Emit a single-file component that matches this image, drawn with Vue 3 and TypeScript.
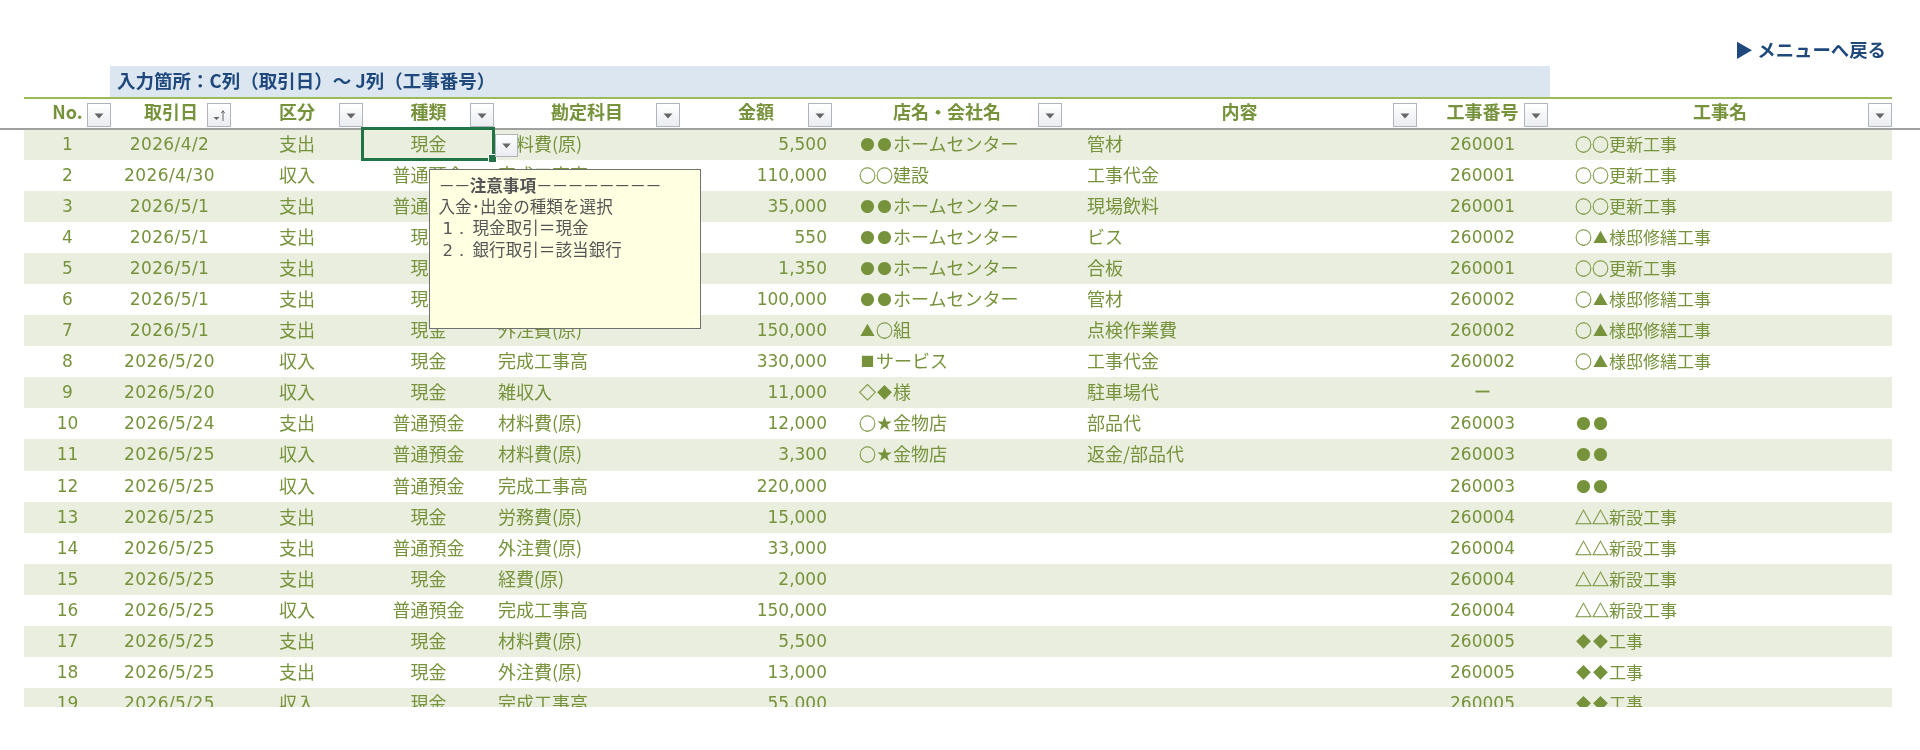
<script setup lang="ts">
interface Row { no: number; date: string; kind: string; type: string; account: string; amount: string; shop: string; detail: string; code: string; name: string }
interface Part { text: string; cls: string }

const headers = [
  { label: 'No.', sort: false },
  { label: '取引日', sort: true },
  { label: '区分', sort: false },
  { label: '種類', sort: false },
  { label: '勘定科目', sort: false },
  { label: '金額', sort: false },
  { label: '店名・会社名', sort: false },
  { label: '内容', sort: false },
  { label: '工事番号', sort: false },
  { label: '工事名', sort: false },
]

const raw = [
  '2026/4/2|支出|現金|材料費(原)|5,500|●●ホームセンター|管材|260001|○○更新工事',
  '2026/4/30|収入|普通預金|完成工事高|110,000|○○建設|工事代金|260001|○○更新工事',
  '2026/5/1|支出|普通預金|経費(原)|35,000|●●ホームセンター|現場飲料|260001|○○更新工事',
  '2026/5/1|支出|現金|材料費(原)|550|●●ホームセンター|ビス|260002|○▲様邸修繕工事',
  '2026/5/1|支出|現金|材料費(原)|1,350|●●ホームセンター|合板|260001|○○更新工事',
  '2026/5/1|支出|現金|材料費(原)|100,000|●●ホームセンター|管材|260002|○▲様邸修繕工事',
  '2026/5/1|支出|現金|外注費(原)|150,000|▲○組|点検作業費|260002|○▲様邸修繕工事',
  '2026/5/20|収入|現金|完成工事高|330,000|■サービス|工事代金|260002|○▲様邸修繕工事',
  '2026/5/20|収入|現金|雑収入|11,000|◇◆様|駐車場代|ー|',
  '2026/5/24|支出|普通預金|材料費(原)|12,000|○★金物店|部品代|260003|●●',
  '2026/5/25|収入|普通預金|材料費(原)|3,300|○★金物店|返金/部品代|260003|●●',
  '2026/5/25|収入|普通預金|完成工事高|220,000|||260003|●●',
  '2026/5/25|支出|現金|労務費(原)|15,000|||260004|△△新設工事',
  '2026/5/25|支出|普通預金|外注費(原)|33,000|||260004|△△新設工事',
  '2026/5/25|支出|現金|経費(原)|2,000|||260004|△△新設工事',
  '2026/5/25|収入|普通預金|完成工事高|150,000|||260004|△△新設工事',
  '2026/5/25|支出|現金|材料費(原)|5,500|||260005|◆◆工事',
  '2026/5/25|支出|現金|外注費(原)|13,000|||260005|◆◆工事',
  '2026/5/25|収入|現金|完成工事高|55,000|||260005|◆◆工事',
]

const rows: Row[] = raw.map((line, i) => {
  const [date, kind, type, account, amount, shop, detail, code, name] = line.split('|')
  return { no: i + 1, date, kind, type, account, amount, shop, detail, code, name }
})

const symbolClass: Record<string, string> = {
  '●': 'sym s-dot', '◆': 'sym s-dia', '■': 'sym s-sq', '▲': 'sym s-tri', '★': 'sym s-star',
  '○': 'sym s-line', '◇': 'sym s-line', '△': 'sym s-line',
}

function parts(text: string): Part[] {
  return text.split(/([●○▲■◆◇△★])/).filter(Boolean).map((t) => ({ text: t, cls: symbolClass[t] ?? '' }))
}
</script>

<template>
  <div class="page">
    <div class="menu-row"><span class="menu-link">▶ メニューへ戻る</span></div>
    <div class="band-row"><div class="band">入力箇所：C列（取引日）～ J列（工事番号）</div></div>
    <div class="sheet-pad">
      <div class="head grid">
        <div v-for="h in headers" :key="h.label" class="hcell">
          <span>{{ h.label }}</span>
          <span class="fbtn">
            <svg width="22" height="22" viewBox="0 0 22 22">
              <template v-if="h.sort">
                <path d="M5.5 13h6l-3 3z" fill="#666" />
                <path d="M15 17V7M13.3 9.2 15 6.6l1.7 2.6" fill="none" stroke="#666" stroke-width="1" />
              </template>
              <path v-else d="M6.5 9.5h9l-4.5 5z" fill="#666" />
            </svg>
          </span>
        </div>
      </div>
    </div>
    <div class="freeze"></div>
    <div class="body-wrap">
      <div class="sheet-pad rows">
        <div v-for="r in rows" :key="r.no" class="grid row" :class="{ odd: r.no % 2 === 1 }">
          <div class="c ctr num">{{ r.no }}</div>
          <div class="c ctr num date">{{ r.date }}</div>
          <div class="c ctr">{{ r.kind }}</div>
          <div class="c ctr">{{ r.type }}</div>
          <div class="c account">{{ r.account }}</div>
          <div class="c amount num">{{ r.amount }}</div>
          <div class="c shop"><span v-for="(p, i) in parts(r.shop)" :key="i" :class="p.cls">{{ p.text }}</span></div>
          <div class="c detail">{{ r.detail }}</div>
          <div class="c ctr num">{{ r.code }}</div>
          <div class="c name"><span v-for="(p, i) in parts(r.name)" :key="i" :class="p.cls">{{ p.text }}</span></div>
        </div>
      </div>
      <div class="selection"><i class="handle"></i></div>
      <span class="dd">
        <svg width="22" height="21" viewBox="0 0 22 21"><path d="M6.5 8.5h9l-4.5 5z" fill="#666" /></svg>
      </span>
      <div class="note">
        <div class="note-title"><span class="dash">－－</span>注意事項<span class="dash">－－－－－－－－</span></div>
        <div>入金･出金の種類を選択</div>
        <div class="item"><span class="idx">1．</span>現金取引＝現金</div>
        <div class="item"><span class="idx">2．</span>銀行取引＝該当銀行</div>
      </div>
    </div>
  </div>
</template>

<style>
html, body { margin: 0; background: #fff; overflow: hidden; }
</style>

<style scoped>
.page {
  height: 750px;
  background: #fff;
  font-family: "Noto Sans CJK JP", "Noto Sans", sans-serif;
  font-size: 18px;
  color: #76933c;
  filter: blur(0.35px);
}
.menu-row {
  height: 66px;
  display: flex;
  justify-content: flex-end;
  align-items: flex-end;
  padding-right: 34px;
  box-sizing: border-box;
  padding-bottom: 4px;
}
.menu-link { color: #1f497d; font-weight: 700; font-size: 18.4px; line-height: 26px; }
.band-row { padding-left: 110px; }
.band {
  width: 1440px;
  height: 32px;
  background: #dce6f1;
  color: #1f497d;
  font-weight: 700;
  font-size: 18.5px;
  line-height: 29px;
  padding-left: 7px;
  box-sizing: border-box;
}
.sheet-pad { margin-left: 24px; width: 1868px; }
.grid {
  display: grid;
  grid-template-columns: 87px 120px 132px 131px 186px 152px 230px 355px 131px 344px;
}
.head { border-top: 2px solid #9bbb59; height: 29px; margin-top: -1px; }
.hcell {
  position: relative;
  text-align: center;
  font-weight: 700;
  font-size: 18px;
  line-height: 25px;
}
.fbtn {
  position: absolute;
  right: 0;
  top: 4px;
  width: 24px;
  height: 24px;
  box-sizing: border-box;
  border: 1.5px solid #b0b4bc;
  background: linear-gradient(#fff, #e9ecf1);
  display: flex;
  align-items: center;
  justify-content: center;
}
.freeze { height: 2px; background: #a0a0a0; margin-bottom: -1px; position: relative; z-index: 1; }
.body-wrap { position: relative; }
.rows { height: 578px; overflow: hidden; }
.row { height: 31.06px; line-height: 29px; }
.row.odd { background: #eaeede; }
.c { white-space: nowrap; overflow: hidden; }
.ctr { text-align: center; }
.num { font-family: "DejaVu Sans", sans-serif; font-size: 17px; line-height: 30px; }
.date { letter-spacing: 0.4px; padding-right: 3px; }
.account { padding-left: 4px; }
.amount { text-align: right; padding-right: 5px; }
.shop { padding-left: 27px; }
.detail { padding-left: 25px; }
.name { padding-left: 27px; font-size: 17px; }
.sym { display: inline-block; width: 17px; text-align: center; vertical-align: top; }
.s-dot { font-size: 14.5px; }
.s-dia { font-size: 15px; }
.s-sq { font-size: 14px; }
.s-tri { font-size: 15px; }
.s-star { font-size: 15.5px; }
.s-line { font-size: 17px; -webkit-text-stroke: 0.3px #76933c; }
.selection {
  position: absolute;
  left: 361px;
  top: -2px;
  width: 134px;
  height: 34px;
  box-sizing: border-box;
  border: 3px solid #217346;
  z-index: 2;
}
.handle {
  position: absolute;
  right: -5px;
  bottom: -5px;
  width: 7px;
  height: 7px;
  background: #217346;
  border: 1px solid #fff;
}
.dd {
  position: absolute;
  left: 495px;
  top: 5px;
  width: 23px;
  height: 23px;
  box-sizing: border-box;
  border: 1.5px solid #b0b4bc;
  background: linear-gradient(#fff, #e9ecf1);
  display: flex;
  align-items: center;
  justify-content: center;
  z-index: 3;
}
.note {
  position: absolute;
  left: 429px;
  top: 40px;
  width: 272px;
  height: 160px;
  box-sizing: border-box;
  background: #ffffe1;
  border: 1.5px solid #707070;
  padding: 5px 8.5px;
  color: #555;
  font-size: 16.6px;
  line-height: 21px;
  z-index: 4;
}
.note-title { font-weight: 700; color: #555; }
.dash { font-weight: 400; letter-spacing: -1px; }
.item { padding-left: 4px; }
.idx { display: inline-block; width: 30px; font-family: "DejaVu Sans", sans-serif; }
</style>
